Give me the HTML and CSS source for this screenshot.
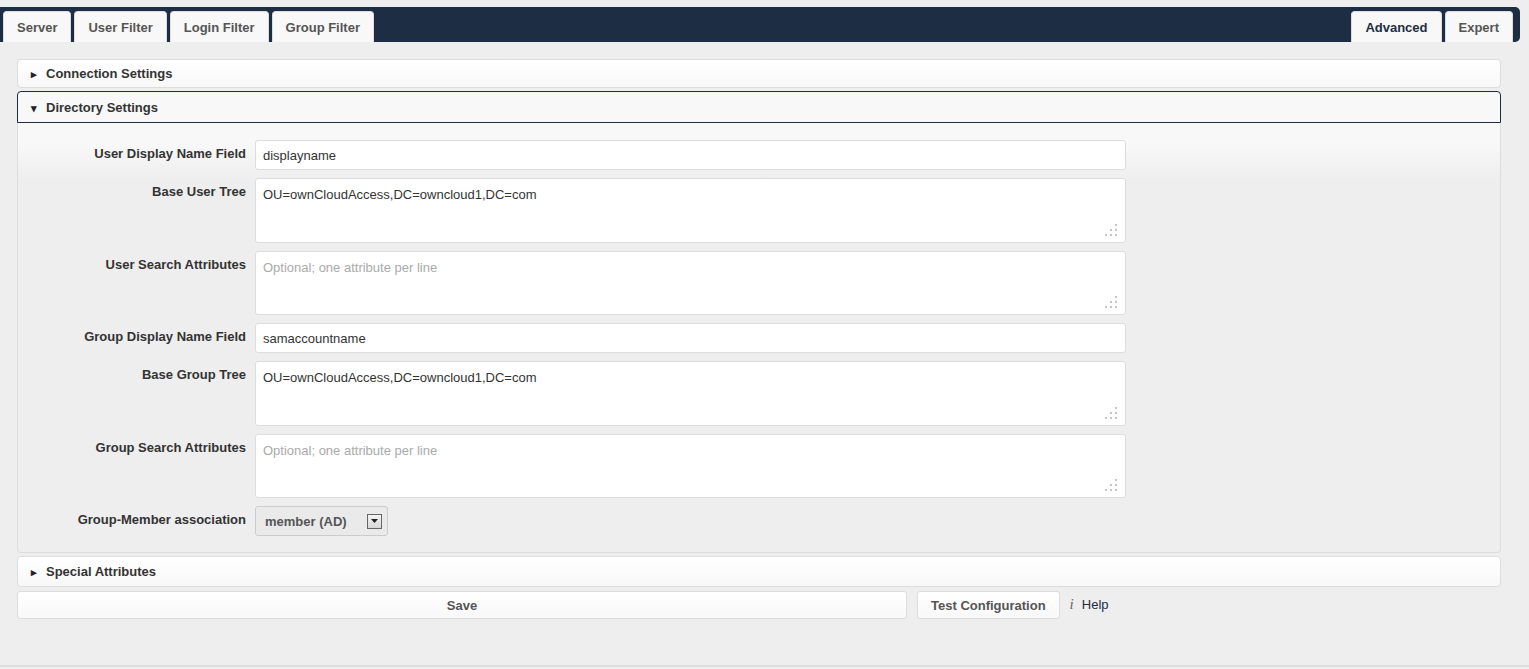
FILE: index.html
```html
<!DOCTYPE html>
<html lang="en">
<head>
    <meta charset="UTF-8">
    <title>LDAP Settings</title>
    <link rel="stylesheet" href="styles.css">
</head>
<body>
    <div class="page">
        <div class="tabbar">
            <div class="tabs">
                <span class="tab">Server</span>
                <span class="tab">User Filter</span>
                <span class="tab">Login Filter</span>
                <span class="tab">Group Filter</span>
            </div>
            <div class="tabs">
                <span class="tab active">Advanced</span>
                <span class="tab">Expert</span>
            </div>
        </div>

        <div class="settings">
            <div class="acc-head"><span class="arrow">&#9656;</span>Connection Settings</div>

            <div class="acc-head open"><span class="arrow">&#9662;</span>Directory Settings</div>
            <div class="acc-body">
                <div class="row">
                    <label>User Display Name Field</label>
                    <input type="text" value="displayname">
                </div>
                <div class="row">
                    <label>Base User Tree</label>
                    <div class="ta-wrap">
                        <textarea>OU=ownCloudAccess,DC=owncloud1,DC=com</textarea>
                        <svg class="grip" width="12" height="12" viewBox="0 0 12 12"><g fill="#c4c4c4"><rect x="10" y="0" width="2" height="2"/><rect x="5" y="5" width="2" height="2"/><rect x="10" y="5" width="2" height="2"/><rect x="0" y="10" width="2" height="2"/><rect x="5" y="10" width="2" height="2"/><rect x="10" y="10" width="2" height="2"/></g></svg>
                    </div>
                </div>
                <div class="row">
                    <label>User Search Attributes</label>
                    <div class="ta-wrap">
                        <textarea placeholder="Optional; one attribute per line"></textarea>
                        <svg class="grip" width="12" height="12" viewBox="0 0 12 12"><g fill="#c4c4c4"><rect x="10" y="0" width="2" height="2"/><rect x="5" y="5" width="2" height="2"/><rect x="10" y="5" width="2" height="2"/><rect x="0" y="10" width="2" height="2"/><rect x="5" y="10" width="2" height="2"/><rect x="10" y="10" width="2" height="2"/></g></svg>
                    </div>
                </div>
                <div class="row">
                    <label>Group Display Name Field</label>
                    <input type="text" value="samaccountname">
                </div>
                <div class="row">
                    <label>Base Group Tree</label>
                    <div class="ta-wrap">
                        <textarea>OU=ownCloudAccess,DC=owncloud1,DC=com</textarea>
                        <svg class="grip" width="12" height="12" viewBox="0 0 12 12"><g fill="#c4c4c4"><rect x="10" y="0" width="2" height="2"/><rect x="5" y="5" width="2" height="2"/><rect x="10" y="5" width="2" height="2"/><rect x="0" y="10" width="2" height="2"/><rect x="5" y="10" width="2" height="2"/><rect x="10" y="10" width="2" height="2"/></g></svg>
                    </div>
                </div>
                <div class="row">
                    <label>Group Search Attributes</label>
                    <div class="ta-wrap">
                        <textarea placeholder="Optional; one attribute per line"></textarea>
                        <svg class="grip" width="12" height="12" viewBox="0 0 12 12"><g fill="#c4c4c4"><rect x="10" y="0" width="2" height="2"/><rect x="5" y="5" width="2" height="2"/><rect x="10" y="5" width="2" height="2"/><rect x="0" y="10" width="2" height="2"/><rect x="5" y="10" width="2" height="2"/><rect x="10" y="10" width="2" height="2"/></g></svg>
                    </div>
                </div>
                <div class="row last">
                    <label>Group-Member association</label>
                    <div class="select">
                        <span>member (AD)</span>
                        <span class="select-arrow"><svg width="7" height="4" viewBox="0 0 7 4"><path d="M0 0h7L3.5 4z" fill="#222"/></svg></span>
                    </div>
                </div>
            </div>

            <div class="acc-head special"><span class="arrow">&#9656;</span>Special Attributes</div>

            <div class="actions">
                <button class="btn save">Save</button>
                <button class="btn test">Test Configuration</button>
                <span class="help"><i>i</i>Help</span>
            </div>
        </div>
    </div>
</body>
</html>
```

FILE: styles.css
```css
body {
    margin: 0;
    background-color: #eeeeee;
    font-family: "Liberation Sans", Arial, sans-serif;
    font-size: 13px;
    color: #555;
}
.page {
    height: 667px;
    padding-top: 7px;
    box-sizing: border-box;
    border-bottom: 2px solid #dddddd;
}
.tabbar {
    width: 1520px;
    height: 35px;
    box-sizing: border-box;
    background-color: #1d2d44;
    border-radius: 0 5px 5px 0;
    display: flex;
    justify-content: space-between;
    align-items: flex-end;
    padding: 0 7px 0 3px;
}
.tabs {
    display: flex;
    gap: 3px;
}
.tab {
    height: 30px;
    line-height: 31px;
    padding: 0 13px;
    background-color: #f8f8f8;
    border: 1px solid #dddddd;
    border-bottom: none;
    border-radius: 4px 4px 0 0;
    font-weight: bold;
    color: #555;
}
.tab.active {
    background-color: #f8f8f8;
    color: #1d2d44;
}
.settings {
    width: 1484px;
    margin: 17px 0 0 17px;
}
.acc-head {
    height: 29px;
    line-height: 28px;
    box-sizing: border-box;
    padding-left: 13px;
    margin-bottom: 3px;
    background: linear-gradient(#ffffff, #f8f8f8);
    border: 1px solid #dddddd;
    border-radius: 4px;
    font-weight: bold;
    color: #333;
}
.acc-head .arrow {
    display: inline-block;
    width: 15px;
    font-size: 11px;
    color: #222;
}
.acc-head.open {
    height: 32px;
    line-height: 31px;
    margin-bottom: 0;
    background: #f8f8f8;
    border-color: #1d2d44;
    border-radius: 4px 4px 0 0;
}
.acc-head.special {
    height: 31px;
    line-height: 30px;
    margin-bottom: 4px;
}
.acc-body {
    padding: 17px 0 16px 0;
    border: 1px solid #dddddd;
    border-top: none;
    border-radius: 0 0 4px 4px;
    background: linear-gradient(#f8f8f8 0, #f8f8f8 20px, #eeeeee 58px);
    margin-bottom: 3px;
}
.row {
    display: flex;
    align-items: flex-start;
    margin-bottom: 8px;
}
.row.last {
    margin-bottom: 0;
}
.row label {
    width: 228px;
    flex: none;
    text-align: right;
    padding: 6px 9px 0 0;
    font-weight: bold;
    color: #333;
}
.row input, .row textarea {
    width: 871px;
    box-sizing: border-box;
    border: 1px solid #dddddd;
    border-radius: 3px;
    background-color: #ffffff;
    font-family: "Liberation Sans", Arial, sans-serif;
    font-size: 13px;
    color: #333;
    padding: 0 7px;
    margin: 0;
    outline: none;
}
.row input {
    height: 30px;
}
.ta-wrap {
    position: relative;
    height: 64.5px;
}
.row textarea {
    display: block;
    height: 64.5px;
    padding: 8px 7px;
    resize: none;
}
.row textarea::placeholder {
    color: #aaaaaa;
}
.grip {
    position: absolute;
    right: 9px;
    bottom: 7px;
}
.select {
    width: 133px;
    height: 30px;
    box-sizing: border-box;
    border: 1px solid #cccccc;
    border-radius: 3px;
    background-color: #eaeaea;
    display: flex;
    align-items: center;
    justify-content: space-between;
    padding: 0 5px 0 9px;
    font-weight: bold;
    color: #555;
}
.select-arrow {
    width: 15px;
    height: 15px;
    box-sizing: border-box;
    border: 1px solid #666;
    background: linear-gradient(#f4f4f4, #d8d8d8);
    display: flex;
    align-items: center;
    justify-content: center;
}
.actions {
    display: flex;
    align-items: center;
    gap: 10px;
}
.btn {
    height: 28px;
    box-sizing: border-box;
    border: 1px solid #dddddd;
    border-radius: 3px;
    background: linear-gradient(#ffffff, #f8f8f8);
    font-family: "Liberation Sans", Arial, sans-serif;
    font-size: 13px;
    font-weight: bold;
    color: #555;
    padding: 0 13px;
}
.btn.save {
    width: 890px;
}
.help {
    color: #1d2d44;
    margin-bottom: 2px;
}
.help i {
    font-family: "Liberation Serif", serif;
    font-size: 15px;
    color: #666;
    margin-right: 8px;
}
```
